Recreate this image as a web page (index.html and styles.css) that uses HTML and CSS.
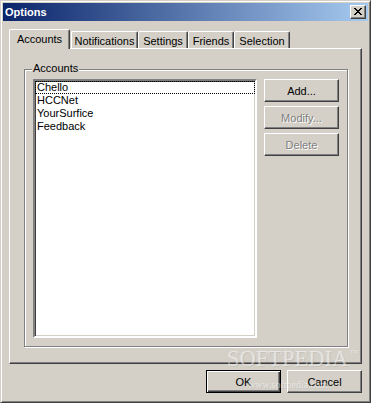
FILE: index.html
```html
<!DOCTYPE html>
<html>
<head>
<meta charset="utf-8">
<title>Options</title>
<link rel="stylesheet" href="styles.css">
</head>
<body>
<div class="window">
  <div class="titlebar">
    <span class="title">Options</span>
    <button class="close" type="button" aria-label="Close">
      <svg class="close-x" width="8" height="7" viewBox="0 0 8 7" shape-rendering="crispEdges"><path d="M0 0h2v1h-2zM6 0h2v1h-2zM1 1h2v1h-2zM5 1h2v1h-2zM2 2h4v1h-4zM3 3h2v1h-2zM2 4h4v1h-4zM1 5h2v1h-2zM5 5h2v1h-2zM0 6h2v1h-2zM6 6h2v1h-2z" fill="#000"/></svg>
    </button>
  </div>
  <div class="content">
    <div class="tabs">
      <div class="tab active">Accounts</div>
      <div class="tab tab-notif">Notifications</div>
      <div class="tab tab-settings">Settings</div>
      <div class="tab tab-friends">Friends</div>
      <div class="tab tab-selection">Selection</div>
    </div>
    <div class="panel">
      <div class="group">
        <span class="legend">Accounts</span>
        <div class="listbox">
          <div class="item focused">Chello</div>
          <div class="item">HCCNet</div>
          <div class="item">YourSurfice</div>
          <div class="item">Feedback</div>
        </div>
        <div class="side-buttons">
          <button class="btn" type="button">Add...</button>
          <button class="btn" type="button" disabled>Modify...</button>
          <button class="btn" type="button" disabled>Delete</button>
        </div>
      </div>
    </div>
    <div class="actions">
      <button class="btn default" type="button">OK</button>
      <button class="btn" type="button">Cancel</button>
    </div>
  </div>
  <div class="wm-logo">SOFTPEDIA</div>
  <div class="wm-tm">™</div>
  <div class="wm-url">www.softpedia.com</div>
</div>
</body>
</html>
```
FILE: styles.css
```css
* {
  box-sizing: border-box;
}

html, body {
  margin: 0;
  padding: 0;
  background: #d4d0c8;
}

body {
  font-family: "Liberation Sans", Arial, sans-serif;
  font-size: 11px;
  color: #000;
}

.window {
  position: relative;
  width: 371px;
  height: 403px;
  background: #d4d0c8;
  border: 1px solid;
  border-color: #d4d0c8 #404040 #404040 #d4d0c8;
  box-shadow: inset 1px 1px #fff, inset -1px -1px #808080;
  padding: 2px;
  display: flex;
  flex-direction: column;
  overflow: hidden;
}

.titlebar {
  height: 18px;
  flex: none;
  background: linear-gradient(to right, #0a246a, #a6caf0);
  display: flex;
  align-items: center;
  justify-content: space-between;
  padding: 0 2px;
}

.title {
  color: #fff;
  font-weight: bold;
  line-height: 18px;
}

.close {
  appearance: none;
  margin: 0;
  width: 16px;
  height: 14px;
  padding: 2px 0 0 3px;
  background: #d4d0c8;
  border: 1px solid;
  border-color: #fff #404040 #404040 #fff;
  box-shadow: inset -1px -1px #808080;
  display: flex;
  align-items: flex-start;
  justify-content: flex-start;
}

.close-x {
  display: block;
}

.content {
  padding: 8px 6px 0 6px;
  display: flex;
  flex-direction: column;
}

.tabs {
  display: flex;
  align-items: flex-end;
  height: 19px;
}

.tab {
  height: 17px;
  background: #d4d0c8;
  border-top: 1px solid #fff;
  border-left: 1px solid #fff;
  border-right: 1px solid #404040;
  border-radius: 2px 2px 0 0;
  box-shadow: inset -1px 0 #808080;
  padding-top: 3px;
  line-height: 13px;
  text-align: center;
  white-space: nowrap;
}

.tab.active {
  width: 61px;
  height: 20px;
  margin-bottom: -1px;
  margin-right: 1px;
  position: relative;
  z-index: 1;
}

.tab-notif { width: 67px; }
.tab-settings { width: 50px; }
.tab-friends { width: 46px; }
.tab-selection { width: 56px; }

.panel {
  height: 316px;
  border: 1px solid;
  border-color: #fff #404040 #404040 #fff;
  box-shadow: inset -1px -1px #808080;
  padding: 20px 13px 0 14px;
}

.group {
  position: relative;
  height: 278px;
  border: 1px solid #808080;
  box-shadow: inset 1px 1px #fff, 1px 1px #fff;
  display: flex;
  align-items: flex-start;
  gap: 7px;
  padding: 9px 7px 8px 8px;
}

.legend {
  position: absolute;
  top: -8px;
  left: 7px;
  padding: 0 1px;
  background: #d4d0c8;
  line-height: 13px;
}

.listbox {
  width: 224px;
  height: 259px;
  flex: none;
  background: #fff;
  border: 2px solid;
  border-color: #808080 #fff #fff #808080;
  box-shadow: inset 1px 1px #404040, inset -1px -1px #d4d0c8;
}

.item {
  line-height: 13px;
  height: 13px;
  padding-left: 2px;
  white-space: nowrap;
}

.item.focused {
  outline: 1px dotted #000;
  outline-offset: -1px;
}

.side-buttons {
  display: flex;
  flex-direction: column;
  gap: 4px;
}

.btn {
  appearance: none;
  margin: 0;
  width: 75px;
  height: 23px;
  padding: 0;
  font: inherit;
  color: #000;
  background: #d4d0c8;
  border: 1px solid;
  border-color: #fff #404040 #404040 #fff;
  box-shadow: inset -1px -1px #808080;
  text-align: center;
}

.btn:disabled {
  color: #808080;
  text-shadow: 1px 1px #fff;
}

.btn.default {
  border-color: #000;
  box-shadow: inset 1px 1px #fff, inset -1px -1px #404040, inset -2px -2px #808080;
}

.actions {
  display: flex;
  justify-content: flex-end;
  gap: 6px;
  margin-top: 6px;
}

.wm-logo,
.wm-tm,
.wm-url {
  position: absolute;
  font-family: "Liberation Serif", "Times New Roman", serif;
  color: rgba(255, 255, 255, 0.5);
  text-shadow: 1px 1px rgba(120, 120, 120, 0.18);
  pointer-events: none;
  white-space: nowrap;
}

.wm-logo {
  left: 226px;
  top: 346px;
  font-size: 22.5px;
  line-height: 23px;
}

.wm-tm {
  left: 349px;
  top: 348px;
  font-size: 9px;
  line-height: 9px;
}

.wm-url {
  left: 247px;
  top: 378px;
  font-size: 10px;
  line-height: 12px;
}
```
